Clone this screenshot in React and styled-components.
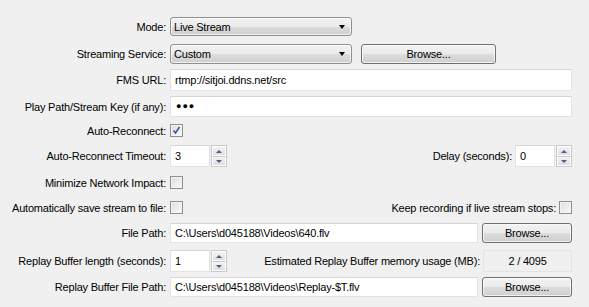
import React from 'react';
import styled, { createGlobalStyle } from 'styled-components';

const GlobalStyle = createGlobalStyle`
	html, body {
		margin: 0;
		padding: 0;
		background: #f0f0f0;
	}
	body {
		font-family: "Liberation Sans", Arial, sans-serif;
		font-size: 11px;
		letter-spacing: -0.2px;
		color: #000;
	}
`;

const Page = styled.div`
	width: 589px;
	height: 307px;
	box-sizing: border-box;
	padding: 17px 17px 0 0;
	background: #f0f0f0;
	overflow: hidden;
`;

const Row = styled.div`
	display: flex;
	align-items: center;
	height: ${(p) => p.$h}px;
	margin-top: ${(p) => p.$mt}px;
`;

const Label = styled.div`
	width: 166px;
	flex: none;
	text-align: right;
	padding-right: 4px;
	box-sizing: content-box;
	white-space: nowrap;
`;

const InlineLabel = styled.div`
	flex: 1;
	text-align: right;
	padding-right: ${(p) => p.$pr || 3}px;
	white-space: nowrap;
`;

const SelectBox = styled.div`
	position: relative;
	width: ${(p) => p.$w}px;
	height: 100%;
	box-sizing: border-box;
	border: 1px solid #8e8f8f;
	border-radius: 3px;
	background: linear-gradient(#f2f2f2 0%, #ebebeb 50%, #dddddd 51%, #cfcfcf 100%);
	display: flex;
	align-items: center;
	padding-left: 3px;
	box-shadow: inset 0 0 0 1px rgba(255, 255, 255, 0.7);
`;

const Arrow = styled.span`
	position: absolute;
	right: 6px;
	top: 50%;
	margin-top: -2px;
	width: 0;
	height: 0;
	border-left: 3.5px solid transparent;
	border-right: 3.5px solid transparent;
	border-top: 4px solid #000;
`;

const Button = styled.div`
	width: ${(p) => p.$w}px;
	height: 100%;
	margin-left: ${(p) => p.$ml || 0}px;
	box-sizing: border-box;
	border: 1px solid #707070;
	border-radius: 3px;
	background: linear-gradient(#f2f2f2 0%, #ebebeb 50%, #dddddd 51%, #cfcfcf 100%);
	box-shadow: inset 0 0 0 1px rgba(255, 255, 255, 0.7);
	display: flex;
	align-items: center;
	justify-content: center;
`;

const TextInput = styled.div`
	flex: ${(p) => (p.$w ? 'none' : 1)};
	width: ${(p) => (p.$w ? `${p.$w}px` : 'auto')};
	height: 100%;
	box-sizing: border-box;
	background: #fff;
	border: 1px solid #e3e3e3;
	border-top-color: #d5d5d5;
	display: flex;
	align-items: center;
	padding-left: 4px;
	white-space: nowrap;
	overflow: hidden;
`;

const Dots = styled.span`
	font-size: 9px;
	letter-spacing: 1px;
	line-height: 1;
	padding-left: 1px;
`;

const Spinner = styled.div`
	display: flex;
	height: 100%;
	width: 57px;
	flex: none;
`;

const SpinField = styled.div`
	flex: 1;
	background: #fff;
	border: 1px solid #e3e3e3;
	border-top-color: #d5d5d5;
	display: flex;
	align-items: center;
	padding-left: 4px;
	margin-right: 1px;
`;

const SpinButtons = styled.div`
	width: 16px;
	display: flex;
	flex-direction: column;
	border: 1px solid #c8c8c8;
	box-sizing: border-box;
	background: #e8e8e8;
`;

const SpinBtn = styled.div`
	flex: 1;
	display: flex;
	align-items: center;
	justify-content: center;
	border: 1px solid #fff;
	background: linear-gradient(#f4f4f4, #dedede);
	& + & {
		border-top: 1px solid #c8c8c8;
	}
`;

const Tri = styled.span`
	width: 0;
	height: 0;
	border-left: 3px solid transparent;
	border-right: 3px solid transparent;
	${(p) => (p.$up ? 'border-bottom: 3px solid #4b5f86;' : 'border-top: 3px solid #4b5f86;')}
`;

const Check = styled.div`
	width: 13px;
	height: 13px;
	box-sizing: border-box;
	border: 1px solid #8f8f8f;
	background: linear-gradient(135deg, #dcdcdc, #fbfbfb);
	box-shadow: inset 0 0 0 1px #f4f4f4;
	flex: none;
	display: flex;
	align-items: center;
	justify-content: center;
`;

const ReadOnly = styled.div`
	width: 89px;
	height: 100%;
	box-sizing: border-box;
	border: 1px solid #e4e4e4;
	background: #f0f0f0;
	display: flex;
	align-items: center;
	justify-content: center;
`;

const CheckBox = ({ checked }) => (
	<Check>
		{checked ? (
			<svg width="9" height="9" viewBox="0 0 9 9">
				<path d="M1.5 4.5 L3.5 7 L7.5 1" stroke="#3c5a9a" strokeWidth="1.6" fill="none" />
			</svg>
		) : null}
	</Check>
);

const Spin = ({ value }) => (
	<Spinner>
		<SpinField>{value}</SpinField>
		<SpinButtons>
			<SpinBtn><Tri $up /></SpinBtn>
			<SpinBtn><Tri /></SpinBtn>
		</SpinButtons>
	</Spinner>
);

const App = () => (
	<Page>
		<GlobalStyle />
		<Row $h={19} $mt={0}>
			<Label>Mode:</Label>
			<SelectBox $w={182}>Live Stream<Arrow /></SelectBox>
		</Row>
		<Row $h={20} $mt={8}>
			<Label>Streaming Service:</Label>
			<SelectBox $w={182}>Custom<Arrow /></SelectBox>
			<Button $w={135} $ml={9}>Browse...</Button>
		</Row>
		<Row $h={22} $mt={5}>
			<Label>FMS URL:</Label>
			<TextInput>rtmp://sitjoi.ddns.net/src</TextInput>
		</Row>
		<Row $h={21} $mt={5}>
			<Label>Play Path/Stream Key (if any):</Label>
			<TextInput><Dots>●●●</Dots></TextInput>
		</Row>
		<Row $h={13} $mt={7}>
			<Label>Auto-Reconnect:</Label>
			<CheckBox checked />
		</Row>
		<Row $h={22} $mt={8}>
			<Label>Auto-Reconnect Timeout:</Label>
			<Spin value="3" />
			<InlineLabel>Delay (seconds):</InlineLabel>
			<Spin value="0" />
		</Row>
		<Row $h={13} $mt={9}>
			<Label>Minimize Network Impact:</Label>
			<CheckBox />
		</Row>
		<Row $h={13} $mt={12}>
			<Label>Automatically save stream to file:</Label>
			<CheckBox />
			<InlineLabel>Keep recording if live stream stops:</InlineLabel>
			<CheckBox />
		</Row>
		<Row $h={20} $mt={9}>
			<Label>File Path:</Label>
			<TextInput $w={308}>C:\Users\d045188\Videos\640.flv</TextInput>
			<Button $w={90} $ml={4}>Browse...</Button>
		</Row>
		<Row $h={22} $mt={7}>
			<Label>Replay Buffer length (seconds):</Label>
			<Spin value="1" />
			<InlineLabel>Estimated Replay Buffer memory usage (MB):</InlineLabel>
			<ReadOnly>2 / 4095</ReadOnly>
		</Row>
		<Row $h={20} $mt={5}>
			<Label>Replay Buffer File Path:</Label>
			<TextInput $w={308}>C:\Users\d045188\Videos\Replay-$T.flv</TextInput>
			<Button $w={90} $ml={4}>Browse...</Button>
		</Row>
	</Page>
);

export default App;
